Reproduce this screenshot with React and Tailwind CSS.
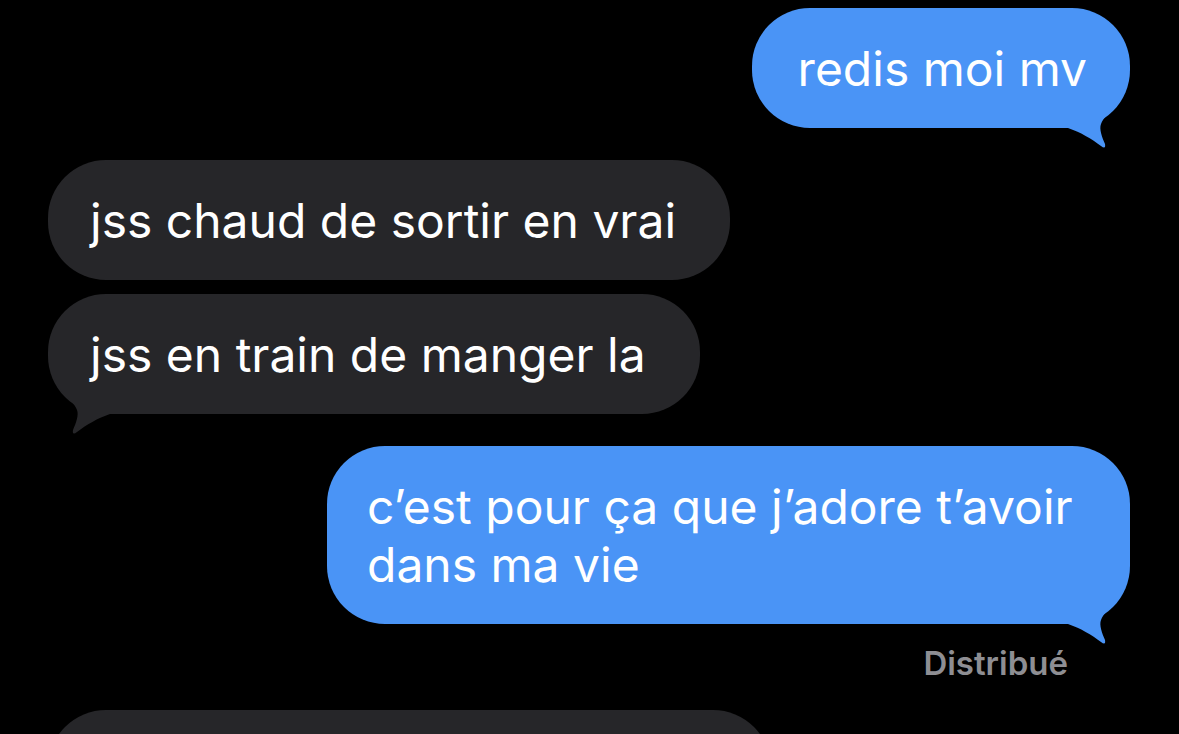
import React from "react";

const BLUE = "#4a94f6";
const GRAY = "#262629";

const Tail = ({ color, left }) => (
  <svg
    viewBox="-70 -50 70 75"
    width="70"
    height="75"
    className={
      left
        ? "absolute left-0 bottom-[-25px] -scale-x-100"
        : "absolute right-0 bottom-[-25px]"
    }
  >
    <path
      fill={color}
      d="M-62 0 C-50 4 -38 11 -29 18 Q-24 22 -25 16 C-28 9 -31 1 -29 -4 C-27 -10 -20 -16 -14 -22 L-6 -35 L-6 -45 L-62 -45 Z"
    />
  </svg>
);

const Sent = ({ children, tail, className = "" }) => (
  <div className={`relative self-end bg-[#4a94f6] rounded-[58px] pr-[43px] pt-[32px] pb-[30px] text-white ${className}`}>
    <p className="relative z-10 leading-[58px]">{children}</p>
    {tail && <Tail color={BLUE} />}
  </div>
);

const Received = ({ children, tail, className = "" }) => (
  <div className={`relative self-start bg-[#262629] rounded-[58px] pl-[42px] pr-[54px] pt-[32px] pb-[30px] text-white ${className}`}>
    <p className="relative z-10 leading-[58px]">{children}</p>
    {tail && <Tail color={GRAY} left />}
  </div>
);

export default function App() {
  return (
    <div
      className="h-[734px] overflow-hidden bg-black pt-2 pl-12 pr-[49px] flex flex-col text-[48px]"
      style={{ fontFamily: "Inter, 'Noto Sans', sans-serif" }}
    >
      <Sent tail className="pl-[46px]">redis moi mv</Sent>

      <Received className="mt-8">jss chaud de sortir en vrai</Received>
      <Received className="mt-[14px]" tail>
        jss en train de manger la
      </Received>

      <Sent tail className="mt-8 w-[803px] pl-[40px]">
        c’est pour ça que j’adore t’avoir dans ma vie
      </Sent>
      <div className="self-end mr-[62px] mt-[18px] text-[33px] leading-[42px] font-semibold text-[#8e8e93]">
        Distribué
      </div>

      <div className="self-start mt-[26px] w-[723px] h-[120px] shrink-0 rounded-[58px] bg-[#262629]" />
    </div>
  );
}
